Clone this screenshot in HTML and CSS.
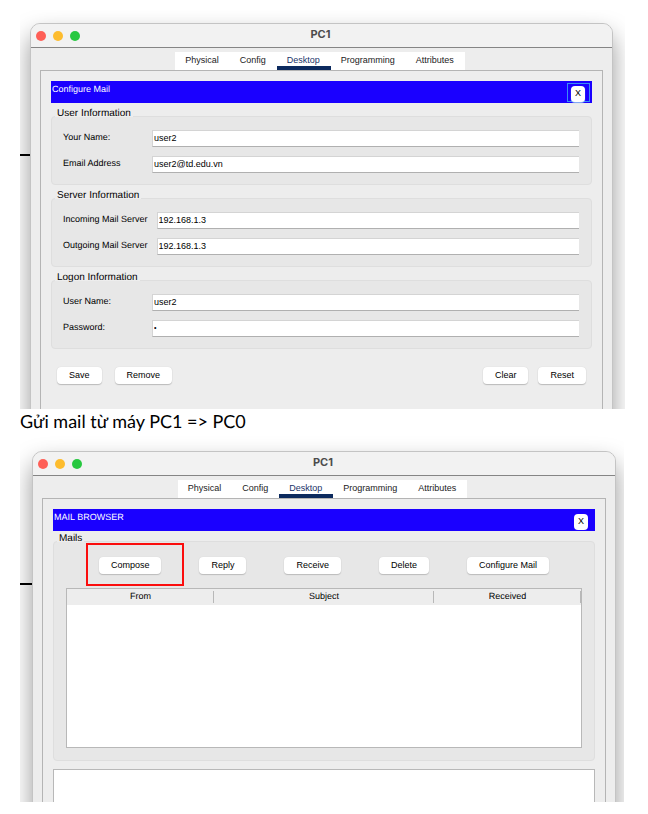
FILE: index.html
```html
<!DOCTYPE html>
<html lang="vi">
<head>
  <meta charset="UTF-8" />
  <meta name="viewport" content="width=device-width, initial-scale=1.0"/>
  <title>PC1 Mail</title>
  <link rel="stylesheet" href="styles.css">
</head>
<body>

  <section class="shot">
    <span class="wire"></span>
    <div class="window">
      <header class="titlebar">
        <div class="lights">
          <span class="light red"></span>
          <span class="light yellow"></span>
          <span class="light green"></span>
        </div>
        <h1>PC1</h1>
      </header>

      <nav class="tabs">
        <button type="button">Physical</button>
        <button type="button">Config</button>
        <button type="button" class="active">Desktop</button>
        <button type="button">Programming</button>
        <button type="button">Attributes</button>
      </nav>

      <form class="panel">
        <div class="bar">
          <h2>Configure Mail</h2>
          <div class="close-frame focused"><button type="button" class="close">X</button></div>
        </div>

        <fieldset>
          <legend>User Information</legend>
          <div class="box fields">
            <label for="name">Your Name:</label>
            <input type="text" id="name" value="user2">
            <label for="email">Email Address</label>
            <input type="text" id="email" value="user2@td.edu.vn">
          </div>
        </fieldset>

        <fieldset>
          <legend>Server Information</legend>
          <div class="box fields">
            <label for="incoming">Incoming Mail Server</label>
            <input type="text" id="incoming" value="192.168.1.3">
            <label for="outgoing">Outgoing Mail Server</label>
            <input type="text" id="outgoing" value="192.168.1.3">
          </div>
        </fieldset>

        <fieldset>
          <legend>Logon Information</legend>
          <div class="box fields">
            <label for="user">User Name:</label>
            <input type="text" id="user" value="user2">
            <label for="password">Password:</label>
            <input type="password" id="password" value="1">
          </div>
        </fieldset>

        <div class="actions">
          <div class="left">
            <button type="button" class="btn">Save</button>
            <button type="button" class="btn">Remove</button>
          </div>
          <div class="right">
            <button type="button" class="btn">Clear</button>
            <button type="button" class="btn">Reset</button>
          </div>
        </div>
      </form>
    </div>
  </section>

  <p class="caption">Gửi mail từ máy PC1 =&gt; PC0</p>

  <section class="shot browser">
    <span class="wire"></span>
    <div class="window">
      <header class="titlebar">
        <div class="lights">
          <span class="light red"></span>
          <span class="light yellow"></span>
          <span class="light green"></span>
        </div>
        <h1>PC1</h1>
      </header>

      <nav class="tabs">
        <button type="button">Physical</button>
        <button type="button">Config</button>
        <button type="button" class="active">Desktop</button>
        <button type="button">Programming</button>
        <button type="button">Attributes</button>
      </nav>

      <div class="panel">
        <div class="bar">
          <h2>MAIL BROWSER</h2>
          <div class="close-frame"><button type="button" class="close">X</button></div>
        </div>

        <fieldset>
          <legend>Mails</legend>
          <div class="box mails">
            <div class="toolbar">
              <span class="marked"><button type="button" class="btn">Compose</button></span>
              <button type="button" class="btn">Reply</button>
              <button type="button" class="btn">Receive</button>
              <button type="button" class="btn">Delete</button>
              <button type="button" class="btn">Configure Mail</button>
            </div>
            <div class="list">
              <table>
                <thead>
                  <tr>
                    <th class="from">From</th>
                    <th>Subject</th>
                    <th class="received">Received</th>
                  </tr>
                </thead>
                <tbody></tbody>
              </table>
            </div>
          </div>
        </fieldset>

        <textarea class="message" aria-label="Message" readonly></textarea>
      </div>
    </div>
  </section>

</body>
</html>
```

FILE: styles.css
```css
* {
  box-sizing: border-box;
}
body {
  margin: 0;
  padding: 10px 23px 12px 20px;
  background: #fff;
  color: #000;
  font: 9px/12px "Liberation Sans", Arial, sans-serif;
  text-rendering: geometricPrecision;
}
button, input, textarea {
  font: inherit;
  color: inherit;
}
h1, h2, p {
  margin: 0;
  font-weight: normal;
}

/* cropped area around each window */
.shot {
  position: relative;
  overflow: hidden;
  padding: 13px 12px 0 10px;
}
.shot.browser {
  margin-right: 1px;
  padding: 20px 8px 0 12px;
}
.wire {
  position: absolute;
  left: 0;
  top: 144px;
  width: 14px;
  height: 2px;
  background: #000;
}
.browser .wire {
  top: 152px;
}

/* window, its bottom runs out of the crop */
.window {
  position: relative;
  margin-bottom: -40px;
  border: 1px solid #c4c4c4;
  border-radius: 10px 10px 0 0;
  background: #ededed;
  box-shadow: 0 12px 24px rgba(0, 0, 0, 0.4);
}
.titlebar {
  display: grid;
  grid-template-columns: 1fr auto 1fr;
  align-items: center;
  height: 24px;
  padding: 0 7px 0 5px;
  border-bottom: 1px solid #858585;
  border-radius: 9px 9px 0 0;
  background: #f2f2f2;
}
.titlebar h1 {
  padding-bottom: 3px;
  color: #4c4c4c;
  font: bold 11px/14px Inter, "Liberation Sans", sans-serif;
}
.lights {
  display: flex;
  gap: 7px;
}
.light {
  width: 10px;
  height: 10px;
  border-radius: 50%;
}
.red {
  background: #fe5f57;
}
.yellow {
  background: #fdbc2e;
}
.green {
  background: #27c840;
}

.tabs {
  display: flex;
  justify-content: center;
  padding: 4px 3px 0 0;
}
.tabs button {
  height: 18px;
  padding: 0 11px 2px 10px;
  border: 0;
  background: #fff;
  color: #222;
}
.tabs .active {
  box-shadow: inset 0 -4px #0c2a5e;
  color: #1a3468;
}

.panel {
  margin: 0 9px;
  padding: 10px 10px 64px;
  border: 1px solid #b4b4b4;
  border-bottom: 0;
}
.bar {
  display: flex;
  justify-content: space-between;
  height: 22px;
  padding: 2px 2px 0 1px;
  background: #1a00ff;
  color: #fff;
}
.bar h2 {
  font-size: 9px;
  line-height: 12px;
}
.close-frame {
  width: 23px;
  height: 19px;
  padding: 3px 4px 0;
}
.focused {
  padding: 2px 3px 0;
  border: 1px solid #3a8cf5;
}
.close {
  display: block;
  width: 14px;
  height: 16px;
  padding: 0 0 3px;
  border: 0;
  border-radius: 4px;
  background: #fff;
  color: #000;
}
.focused .close {
  box-shadow: 0 1px 1px #8db9f5;
}

fieldset {
  margin: 3px 0 0;
  padding: 0;
  border: 0;
  min-width: 0;
}
legend {
  position: relative;
  margin: 0 0 -6px 4px;
  padding: 0 2px;
  background: linear-gradient(#ededed 11px, #e7e7e7 0);
  font-size: 10px;
  line-height: 16px;
}
.box {
  border: 1px solid #dedede;
  border-radius: 4px;
  background: #e7e7e7;
}
.fields {
  display: grid;
  grid-template-columns: minmax(80px, auto) 1fr;
  gap: 9px;
  padding: 13px 12px 11px 11px;
}
.fields label {
  padding-top: 1px;
}
.fields input {
  width: 100%;
  height: 17px;
  padding: 0 1px 2px;
  border: 1px solid #d4d4d4;
  border-width: 1px 0 1px 1px;
  border-bottom-color: #b0b0b0;
  background: #fff;
}
.fields input[type="password"] {
  font-size: 7px;
}

.actions {
  display: flex;
  justify-content: space-between;
  padding: 18px 6px 0;
}
.left {
  display: flex;
  gap: 13px;
}
.right {
  display: flex;
  gap: 10px;
}
.btn {
  height: 17px;
  padding: 0 12px 2px;
  border: 0;
  border-radius: 4px;
  background: #fff;
  box-shadow: 0 1px 1px #bbb, 0 0 1px #ccc;
  white-space: nowrap;
}

.caption {
  height: 22px;
  font: 18px/24px Lato, "Open Sans", sans-serif;
}

/* mail browser */
.browser fieldset {
  margin-top: 0;
}
.mails {
  padding: 15px 12px 12px;
}
.toolbar {
  display: flex;
  justify-content: center;
  gap: 38px;
}
.marked {
  position: relative;
}
.marked .btn {
  display: block;
}
.marked::after {
  content: "";
  position: absolute;
  inset: -14px -23px -12px -13px;
  border: 2px solid #fb0d0d;
  pointer-events: none;
}
.list {
  height: 160px;
  margin-top: 14px;
  border: 1px solid #b8b8b8;
  background: #fff;
}
table {
  width: 100%;
  table-layout: fixed;
  border-collapse: collapse;
}
th {
  height: 16px;
  padding: 0 0 3px;
  background: linear-gradient(#b8b8b8, #b8b8b8) right 2px / 1px 12px no-repeat #ededed;
  font-weight: normal;
}
.from, .received {
  width: 147px;
}
.message {
  display: block;
  width: 100%;
  height: 74px;
  margin: 8px 0 -66px;
  border: 1px solid #b8b8b8;
  background: #fff;
  resize: none;
}
```
